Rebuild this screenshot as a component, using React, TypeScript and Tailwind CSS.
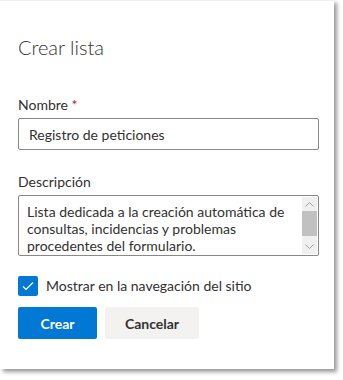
import React from "react";

export default function App() {
  return (
    <div className="w-[343px] h-[380px] bg-white" style={{ fontFamily: 'Lato, "Noto Sans", sans-serif' }}>
      <div className="w-[334px] h-[369px] bg-white border-t border-[#f0f0f0] shadow-[3px_3px_4px_rgba(0,0,0,0.4)] px-[18px] pt-[32px] text-[#323130]">
        <h1 className="text-[20px] font-light leading-[28px] text-[#323130]">Crear lista</h1>
        <div className="mt-[34px] text-[14px] leading-[20px]">
          Nombre <span className="text-[#c4262c]">*</span>
        </div>
        <div className="mt-[3px] w-[301px] h-[32px] border border-[#8a8886] rounded-[2px] flex items-center px-[10px] text-[14px]">
          Registro de peticiones
        </div>
        <div className="mt-[22px] text-[14px] leading-[20px]">Descripción</div>
        <div className="mt-[3px] w-[301px] h-[61px] border border-[#8a8886] rounded-[2px] flex overflow-hidden">
          <div className="flex-1 pl-[8px] pt-[7px] text-[14px] leading-[17px]">
            Lista dedicada a la creación automática de consultas, incidencias y problemas procedentes del formulario.
          </div>
          <div className="w-[15px] flex flex-col bg-[#f0f0f0] mr-[1px] my-[1px]">
            <div className="h-[14px] flex items-center justify-center">
              <svg width="9" height="5" viewBox="0 0 9 5"><path d="M0.5 4.5L4.5 0.5L8.5 4.5" stroke="#a0a0a0" fill="none" /></svg>
            </div>
            <div className="h-[25px] bg-[#c1c1c1]" />
            <div className="flex-1 flex items-center justify-center pt-[3px]">
              <svg width="9" height="5" viewBox="0 0 9 5"><path d="M0.5 0.5L4.5 4.5L8.5 0.5" stroke="#a0a0a0" fill="none" /></svg>
            </div>
          </div>
        </div>
        <div className="mt-[20px] flex items-center gap-[8px]">
          <div className="w-[20px] h-[20px] bg-[#0078d4] rounded-[2px] flex items-center justify-center">
            <svg width="12" height="10" viewBox="0 0 12 10"><path d="M1 5.5L4 8.5L11 1.5" stroke="white" strokeWidth="1.2" fill="none" /></svg>
          </div>
          <span className="text-[14px] leading-[20px]">Mostrar en la navegación del sitio</span>
        </div>
        <div className="mt-[11px] flex gap-[8px]">
          <button className="w-[79px] h-[32px] bg-[#0078d4] text-white rounded-[2px] text-[14px] font-bold">Crear</button>
          <button className="w-[94px] h-[32px] bg-[#f3f2f1] text-[#323130] rounded-[2px] text-[14px] font-bold">Cancelar</button>
        </div>
      </div>
    </div>
  );
}
